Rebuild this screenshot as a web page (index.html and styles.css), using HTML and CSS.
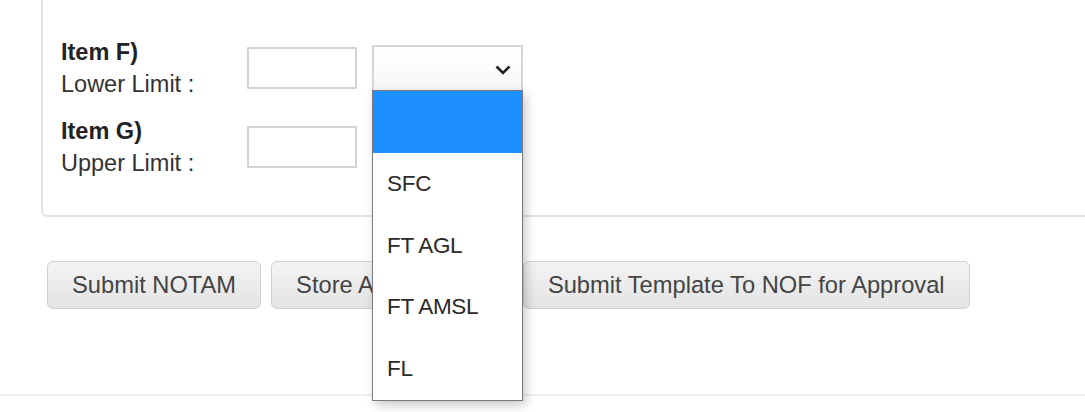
FILE: index.html
```html
<!DOCTYPE html>
<html>
<head>
<meta charset="utf-8">
<link rel="stylesheet" href="styles.css">
</head>
<body>
<div class="page">
  <div class="card">
    <div class="row">
      <div class="label"><b>Item F)</b><span>Lower Limit :</span></div>
      <input class="field" type="text">
      <div class="select-wrap">
        <div class="select">
          <svg class="chev" width="16" height="10" viewBox="0 0 16 10"><polyline points="1.5,1.5 8,8 14.5,1.5" fill="none" stroke="#222" stroke-width="2.6"/></svg>
        </div>
        <ul class="menu">
          <li class="opt active"></li>
          <li class="opt">SFC</li>
          <li class="opt">FT AGL</li>
          <li class="opt">FT AMSL</li>
          <li class="opt">FL</li>
        </ul>
      </div>
    </div>
    <div class="row">
      <div class="label"><b>Item G)</b><span>Upper Limit :</span></div>
      <input class="field" type="text">
    </div>
  </div>
  <div class="actions">
    <button class="btn">Submit NOTAM</button>
    <button class="btn">Store As Template</button>
    <button class="btn">Submit Template To NOF for Approval</button>
  </div>
  <div class="rule"></div>
</div>
</body>
</html>
```

FILE: styles.css
```css
html, body {
  margin: 0;
  padding: 0;
  background: #fff;
  overflow: hidden;
}
.page {
  font-family: "Liberation Sans", Arial, sans-serif;
  font-size: 23.5px;
  color: #333;
  width: 1085px;
  height: 412px;
  overflow: hidden;
}
.card {
  margin: -10px -30px 0 41px;
  border: 2px solid #e2e2e2;
  border-radius: 6px;
  padding: 43.5px 0 36.5px 18px;
  display: flex;
  flex-direction: column;
  gap: 15px;
}
.row {
  display: flex;
  align-items: center;
}
.label {
  width: 186px;
  display: flex;
  flex-direction: column;
  line-height: 32px;
}
.label b {
  font-weight: bold;
  color: #222;
}
.field {
  box-sizing: border-box;
  width: 110px;
  height: 42px;
  margin: 0 15px 0 0;
  border: 2px solid #d4d4d4;
  border-radius: 1px;
  background: #fff;
  padding: 0;
}
.select-wrap {
  position: relative;
  z-index: 5;
}
.select {
  box-sizing: border-box;
  width: 151px;
  height: 45px;
  border: 2px solid #d6d6d6;
  border-bottom: none;
  background: linear-gradient(#fff, #f7f7f7);
  display: flex;
  align-items: center;
  justify-content: flex-end;
  padding: 2px 10px 0 0;
}
.menu {
  position: absolute;
  left: 0;
  top: 100%;
  box-sizing: border-box;
  width: 151px;
  margin: 0;
  padding: 0;
  list-style: none;
  background: #fff;
  border: 1px solid #7a7a7a;
  box-shadow: 3px 4px 10px rgba(0, 0, 0, 0.22);
}
.opt {
  height: 61.8px;
  line-height: 61.8px;
  padding-left: 14px;
  color: #2a2a2a;
  font-size: 22.5px;
  letter-spacing: -0.3px;
}
.opt.active {
  background: #1e8fff;
}
.actions {
  display: flex;
  gap: 10px;
  margin-top: 44px;
  padding-left: 47px;
}
.btn {
  box-sizing: border-box;
  height: 48px;
  padding: 0 24px;
  border: 1px solid #d0d0d0;
  border-radius: 6px;
  background: linear-gradient(#f3f3f3, #e4e4e4);
  font-family: "Liberation Sans", Arial, sans-serif;
  font-size: 23.7px;
  color: #444;
  white-space: nowrap;
}
.rule {
  margin-top: 85px;
  border-top: 2px solid #efefef;
}
```
